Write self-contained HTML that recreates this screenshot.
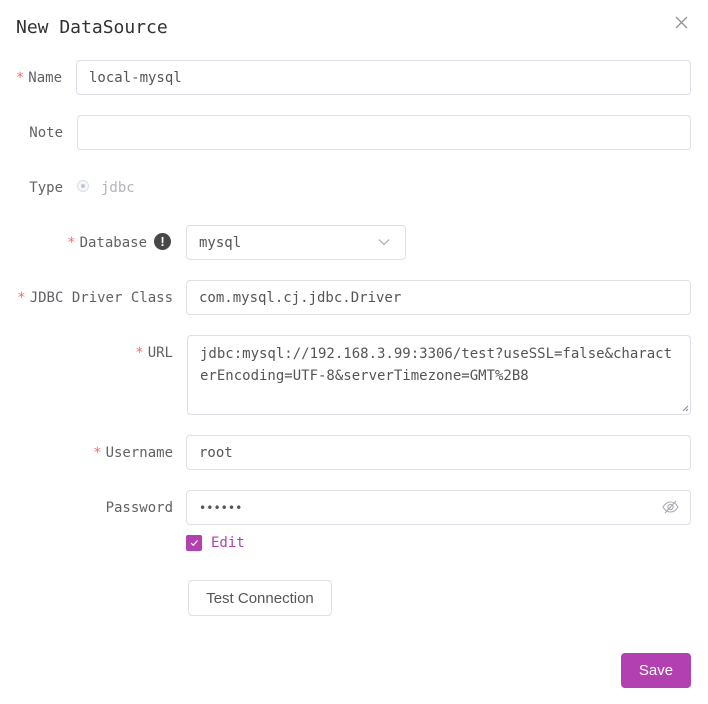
<!DOCTYPE html>
<html><head><style>
body{margin:0;width:708px;height:704px;background:#fff;position:relative;overflow:hidden;font-family:"DejaVu Sans Mono",monospace;font-size:14px;color:#606266}
.a{position:absolute}
.lbl{position:absolute;white-space:nowrap;text-align:right;color:#606266;line-height:22px;margin-top:1px}
.req{color:#f56c6c;margin-right:4px}
.in{position:absolute;border:1px solid #dcdfe6;border-radius:4px;box-sizing:border-box;background:#fff;color:#555;padding-left:12px;line-height:34px;white-space:nowrap}
</style></head><body>
<div class="a" style="left:16px;top:16px;font-size:18px;color:#303133;line-height:24px">New DataSource</div>
<svg class="a" style="left:675px;top:16px" width="13" height="13" viewBox="0 0 13 13"><path d="M1 1L12 12M12 1L1 12" stroke="#909399" stroke-width="1.3"/></svg>

<div class="lbl" style="right:646px;top:66px"><span class="req">*</span>Name</div>
<div class="in" style="left:76px;top:60px;width:615px;height:35px">local-mysql</div>

<div class="lbl" style="right:645px;top:121px">Note</div>
<div class="in" style="left:77px;top:115px;width:614px;height:35px"></div>

<div class="lbl" style="right:645px;top:176px">Type</div>
<div class="a" style="left:77px;top:180px;width:12px;height:12px;border:1px solid #dcdfe6;border-radius:50%;background:#f5f7fa;box-sizing:border-box"><div style="position:absolute;left:3px;top:3px;width:4px;height:4px;border-radius:50%;background:#c0c4cc"></div></div>
<div class="a" style="left:101px;top:177px;color:#b0b3b8;line-height:22px">jdbc</div>

<div class="lbl" style="right:561px;top:231px"><span class="req">*</span>Database</div>
<div class="a" style="left:154px;top:233px;width:17px;height:17px;border-radius:50%;background:#484848;color:#fff;font:bold 13px/17px 'Liberation Sans',sans-serif;text-align:center">!</div>
<div class="in" style="left:186px;top:225px;width:220px;height:35px">mysql</div>
<svg class="a" style="left:378px;top:238px" width="12" height="8" viewBox="0 0 12 8"><path d="M1 1.5L6 6.5L11 1.5" stroke="#a8abb2" stroke-width="1.2" fill="none"/></svg>

<div class="lbl" style="right:535px;top:286px"><span class="req">*</span>JDBC Driver Class</div>
<div class="in" style="left:186px;top:280px;width:505px;height:35px">com.mysql.cj.jdbc.Driver</div>

<div class="lbl" style="right:535px;top:341px"><span class="req">*</span>URL</div>
<div class="in" style="left:187px;top:335px;width:504px;height:80px;line-height:22px;padding-top:7px;white-space:normal;word-break:break-all;padding-right:12px">jdbc:mysql://192.168.3.99:3306/test?useSSL=false&amp;characterEncoding=UTF-8&amp;serverTimezone=GMT%2B8</div>
<svg class="a" style="left:682px;top:405px" width="7" height="7"><path d="M6 1L1 6M6 4L4 6" stroke="#888" stroke-width="1"/></svg>

<div class="lbl" style="right:535px;top:496px">Password</div>
<div class="in" style="left:186px;top:490px;width:505px;height:35px;font-size:12px">••••••</div>
<svg class="a" style="left:662px;top:500px" width="17" height="14" viewBox="0 0 17 14"><path d="M1 7C3 3.5 5.5 2 8.5 2S14 3.5 16 7C14 10.5 11.5 12 8.5 12S3 10.5 1 7Z" stroke="#a8abb2" fill="none" stroke-width="1.1"/><circle cx="8.5" cy="7" r="2.6" stroke="#a8abb2" fill="none" stroke-width="1.1"/><path d="M3 13L14 1" stroke="#a8abb2" stroke-width="1.1"/></svg>

<div class="lbl" style="right:535px;top:441px"><span class="req">*</span>Username</div>
<div class="in" style="left:186px;top:435px;width:505px;height:35px">root</div>

<div class="a" style="left:186px;top:535px;width:16px;height:16px;background:#b240b0;border-radius:2px"></div>
<svg class="a" style="left:189px;top:538px" width="10" height="10"><path d="M2 5L4.3 7.3L8.5 2.5" stroke="#fff" stroke-width="1.2" fill="none"/></svg>
<div class="a" style="left:211px;top:532px;color:#b240b0;line-height:22px">Edit</div>

<div class="a" style="left:188px;top:580px;width:144px;height:36px;border:1px solid #dcdfe6;border-radius:4px;box-sizing:border-box;text-align:center;font:15px/35px 'Liberation Sans',sans-serif;color:#555">Test Connection</div>

<div class="a" style="left:621px;top:653px;width:70px;height:35px;background:#b240b0;border-radius:4px;color:#fff;text-align:center;font:15px/36px 'Liberation Sans',sans-serif">Save</div>
</body></html>
